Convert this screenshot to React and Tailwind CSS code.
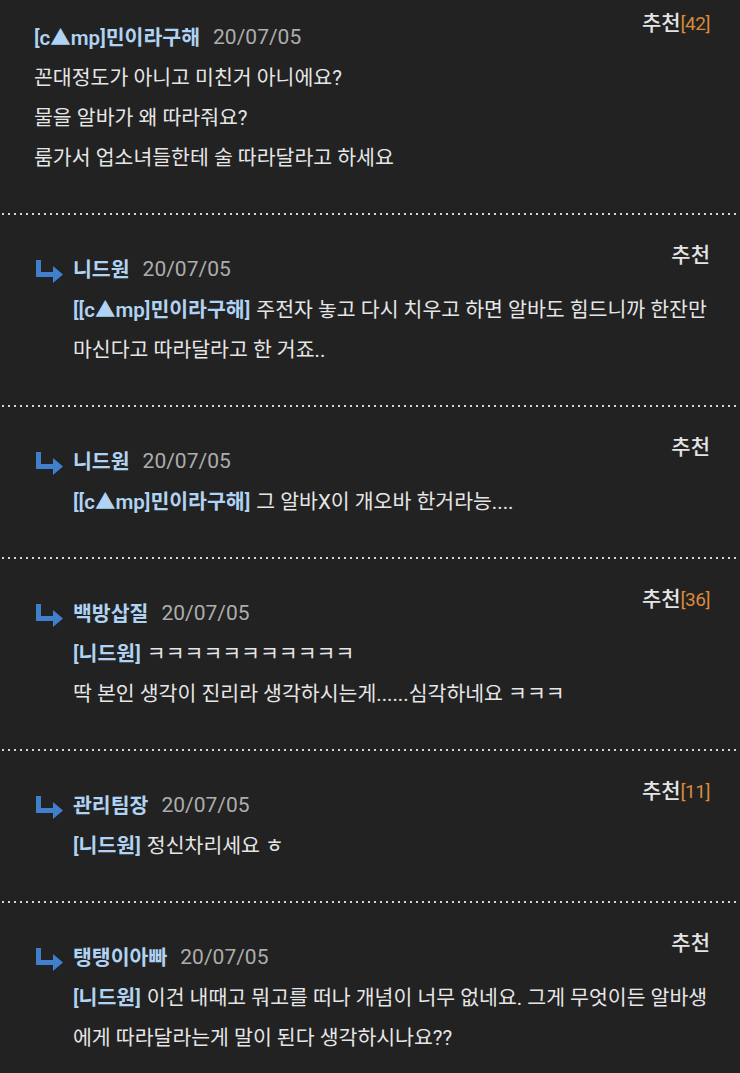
import React from 'react';

const comments = [
  {
    reply: false,
    name: '[c▲mp]민이라구해',
    date: '20/07/05',
    likes: '42',
    lines: [
      [null, '꼰대정도가 아니고 미친거 아니에요?'],
      [null, '물을 알바가 왜 따라줘요?'],
      [null, '룸가서 업소녀들한테 술 따라달라고 하세요'],
    ],
  },
  {
    reply: true,
    name: '니드원',
    date: '20/07/05',
    likes: null,
    lines: [
      ['[[c▲mp]민이라구해]', '주전자 놓고 다시 치우고 하면 알바도 힘드니까 한잔만'],
      [null, '마신다고 따라달라고 한 거죠..'],
    ],
  },
  {
    reply: true,
    name: '니드원',
    date: '20/07/05',
    likes: null,
    lines: [['[[c▲mp]민이라구해]', '그 알바X이 개오바 한거라능....']],
  },
  {
    reply: true,
    name: '백방삽질',
    date: '20/07/05',
    likes: '36',
    lines: [
      ['[니드원]', 'ㅋㅋㅋㅋㅋㅋㅋㅋㅋㅋㅋ'],
      [null, '딱 본인 생각이 진리라 생각하시는게......심각하네요 ㅋㅋㅋ'],
    ],
  },
  {
    reply: true,
    name: '관리팀장',
    date: '20/07/05',
    likes: '11',
    lines: [['[니드원]', '정신차리세요 ㅎ']],
  },
  {
    reply: true,
    name: '탱탱이아빠',
    date: '20/07/05',
    likes: null,
    lines: [
      ['[니드원]', '이건 내때고 뭐고를 떠나 개념이 너무 없네요. 그게 무엇이든 알바생'],
      [null, '에게 따라달라는게 말이 된다 생각하시나요??'],
    ],
  },
];

const ReplyArrow = () => (
  <svg width="30" height="24" viewBox="0 0 30 24" className="shrink-0 mt-[2px]">
    <path d="M2 1h5v12h12V7l10 8.5L19 24v-6H2z" fill="#3f7fcc" />
  </svg>
);

const Divider = () => (
  <div className="h-[2px] w-full bg-[linear-gradient(to_right,#d6d6d6_2px,transparent_2px)] bg-size-[6px_2px] bg-[position:2px_0]" />
);

const Comment = ({ c, first }) => (
  <div className={`flex justify-between items-start pb-[35px] ${first ? 'pt-[4px]' : 'pt-[21px]'} pl-[34px] pr-[30px]`}>
    <div className="mt-[14px] flex flex-col flex-1 min-w-0">
      <div className="flex items-center h-[40px]">
        {c.reply && <ReplyArrow />}
        <span className={`font-semibold text-[#b0d3f3] ${c.reply ? 'ml-[9px]' : ''}`}>{c.name}</span>
        <span className="ml-[13px] text-[21px] text-[#adadad]">{c.date}</span>
      </div>
      {c.lines.map(([tag, text], i) => (
        <div key={i} className={`h-[40px] flex items-center whitespace-nowrap ${c.reply ? 'pl-[39px]' : ''}`}>
          {tag && <span className="font-semibold text-[#b0d3f3] mr-[6px]">{tag}</span>}
          <span>{text}</span>
        </div>
      ))}
    </div>
    <div className="h-[40px] flex items-center whitespace-nowrap shrink-0">
      <span className="text-[21px] font-medium text-[#e4e4e4]">추천</span>
      {c.likes && <span className="text-[19px] text-[#d98a3d] tracking-[-0.5px]">[{c.likes}]</span>}
    </div>
  </div>
);

export default function App() {
  return (
    <div className="w-[740px] h-[1073px] overflow-hidden bg-[#222222] text-[#e6e6e6] text-[20.5px] font-['Roboto','Noto_Sans_CJK_KR',sans-serif]">
      {comments.map((c, i) => (
        <div key={i}>
          {i > 0 && <Divider />}
          <Comment c={c} first={i === 0} />
        </div>
      ))}
    </div>
  );
}
